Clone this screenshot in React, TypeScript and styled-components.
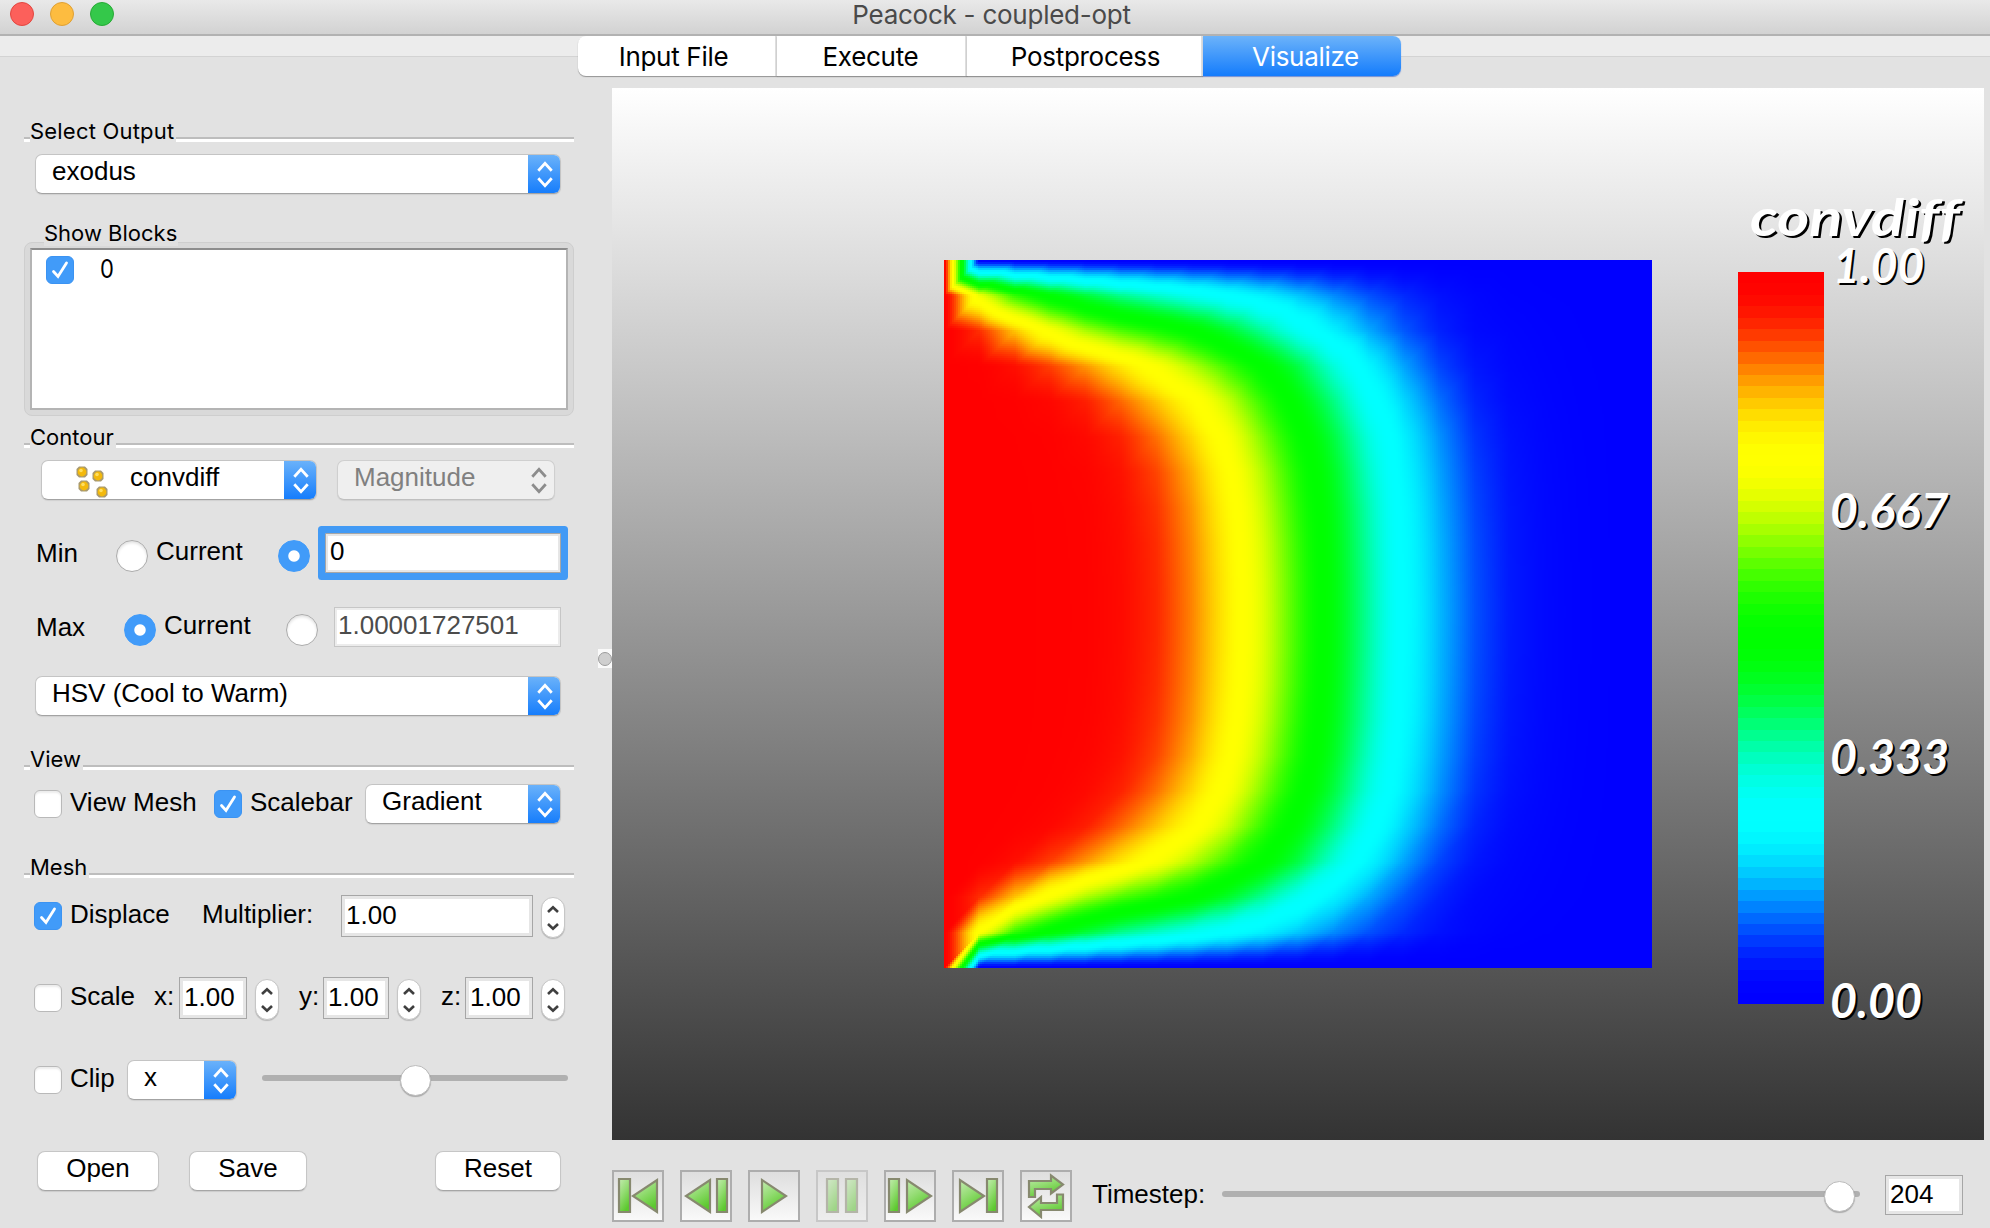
import React, { useLayoutEffect, useRef } from "react";
import styled, { createGlobalStyle, css } from "styled-components";

const GlobalStyle = createGlobalStyle`
  * { box-sizing: border-box; }
  body { margin: 0; background: #e2e2e2; overflow: hidden; }
`;

const HELV = `"Liberation Sans", Arial, Helvetica, sans-serif`;
const SYSTEM = `Inter, "Liberation Sans", sans-serif`;

/* ---------- scalar field and colour map ---------- */

const CELLS = 20;

type Knot = [number, number];

const LEVELS = [0.95, 0.875, 0.75, 0.625, 0.5, 0.375, 0.25, 0.125, 0.06];

/* Where a mesh row crosses each level; `core` is where it leaves the saturated region. */
function profile(core: number, ...at: number[]): Knot[] {
  const last = at[at.length - 1];
  return [
    [0, 1],
    [core, 0.986],
    ...at.map<Knot>((x, i) => [x, LEVELS[i]]),
    [last + 1.3, 0.028],
    [20, 0.001],
  ];
}

const rows: Knot[][] = [
  [[0, 1], [1, 0], [20, 0]],
  [
    [0, 1], [1, 0.71], [2, 0.57], [3, 0.485], [4, 0.42], [5, 0.365], [6, 0.325], [7, 0.285], [8, 0.248],
    [9, 0.212], [10, 0.172], [11, 0.132], [12, 0.095], [13, 0.065], [14, 0.04], [15, 0.024], [16, 0.013],
    [18, 0.004], [20, 0.001],
  ],
  [
    [0, 1], [1, 0.93], [1.8, 0.85], [2.8, 0.75], [4.4, 0.625], [7, 0.5], [9, 0.36], [10.45, 0.25],
    [12.5, 0.125], [13.8, 0.065], [15.1, 0.03], [20, 0.001],
  ],
  profile(1.2, 2.3, 3.75, 5.75, 7.45, 9.0, 10.4, 11.65, 13.35, 14.6),
  profile(2.2, 3.85, 5.25, 7.2, 8.5, 9.75, 11.0, 12.2, 13.85, 15.05),
  profile(3.0, 4.75, 6.15, 7.8, 9.0, 10.2, 11.4, 12.55, 14.17, 15.35),
  profile(3.5, 5.25, 6.6, 8.12, 9.3, 10.45, 11.6, 12.7, 14.33, 15.5),
  profile(3.75, 5.45, 6.8, 8.28, 9.45, 10.57, 11.72, 12.82, 14.43, 15.6),
  profile(3.85, 5.57, 6.9, 8.38, 9.55, 10.65, 11.78, 12.87, 14.5, 15.66),
  profile(3.9, 5.63, 6.95, 8.43, 9.6, 10.69, 11.82, 12.9, 14.53, 15.7),
  profile(3.92, 5.65, 6.97, 8.45, 9.61, 10.7, 11.83, 12.92, 14.55, 15.72),
];

/* Monotone cubic interpolation through the knots. */
function sampleRow(knots: Knot[], x: number) {
  const n = knots.length;
  const slope: number[] = [];
  for (let i = 0; i < n - 1; i++) {
    slope.push((knots[i + 1][1] - knots[i][1]) / (knots[i + 1][0] - knots[i][0]));
  }
  const tangent = knots.map((_, i) => {
    if (i === 0 || i === n - 1) return 0;
    const a = slope[i - 1];
    const b = slope[i];
    return a * b <= 0 ? 0 : (2 * a * b) / (a + b);
  });
  let i = 0;
  while (i < n - 2 && x >= knots[i + 1][0]) i++;
  const h = knots[i + 1][0] - knots[i][0];
  const t = Math.min(1, (x - knots[i][0]) / h);
  const t2 = t * t;
  const t3 = t2 * t;
  return (
    (2 * t3 - 3 * t2 + 1) * knots[i][1] +
    (t3 - 2 * t2 + t) * h * tangent[i] +
    (3 * t2 - 2 * t3) * knots[i + 1][1] +
    (t3 - t2) * h * tangent[i + 1]
  );
}

const nodes = Array.from({ length: CELLS + 1 }, (_, r) =>
  Array.from({ length: CELLS + 1 }, (_, c) => sampleRow(rows[Math.min(r, CELLS - r)], c))
);
nodes[CELLS - 1][1] = 0.74;

/* Linear interpolation on triangles split along the rising diagonal. */
function fieldAt(u: number, v: number) {
  const cx = Math.min(CELLS - 1, Math.floor(u * CELLS));
  const cy = Math.min(CELLS - 1, Math.floor(v * CELLS));
  const x = u * CELLS - cx;
  const y = v * CELLS - cy;
  const tl = nodes[cy][cx];
  const tr = nodes[cy][cx + 1];
  const bl = nodes[cy + 1][cx];
  const br = nodes[cy + 1][cx + 1];
  return x + y <= 1
    ? tl + (tr - tl) * x + (bl - tl) * y
    : br + (bl - br) * (1 - x) + (tr - br) * (1 - y);
}

const sCurve = (t: number) => Math.round(127.5 * (1 - Math.cos(Math.PI * Math.max(0, Math.min(1, t)))));

function rainbow(value: number): [number, number, number] {
  const h = (1 - Math.max(0, Math.min(1, value))) * 4;
  return [sCurve(2 - h), sCurve(h < 2 ? h : 4 - h), sCurve(h - 2)];
}

const BANDS = 64;
const bands = Array.from({ length: BANDS }, (_, i) => `rgb(${rainbow(1 - i / (BANDS - 1)).join(",")})`);

const PLOT = 354;

const PlotCanvas = styled.canvas`
  width: 708px;
  height: 708px;
  margin-left: 332px;
  image-rendering: pixelated;
  flex: none;
`;

function ContourPlot() {
  const ref = useRef<HTMLCanvasElement>(null);
  useLayoutEffect(() => {
    const ctx = ref.current?.getContext("2d");
    if (!ctx) return;
    const img = ctx.createImageData(PLOT, PLOT);
    for (let y = 0; y < PLOT; y++) {
      for (let x = 0; x < PLOT; x++) {
        const [r, g, b] = rainbow(fieldAt((x + 0.5) / PLOT, (y + 0.5) / PLOT));
        const o = (y * PLOT + x) * 4;
        img.data[o] = r;
        img.data[o + 1] = g;
        img.data[o + 2] = b;
        img.data[o + 3] = 255;
      }
    }
    ctx.putImageData(img, 0, 0);
  }, []);
  return <PlotCanvas ref={ref} width={PLOT} height={PLOT} />;
}

/* ---------- window chrome ---------- */

const Window = styled.div`
  width: 1990px;
  height: 1228px;
  display: flex;
  flex-direction: column;
  background: #e2e2e2;
  color: #000;
  font: 26px/30px ${HELV};
  overflow: hidden;
  white-space: nowrap;
`;

const TitleBar = styled.header`
  height: 36px;
  flex: none;
  display: grid;
  grid-template-columns: 1fr auto 1fr;
  align-items: start;
  background: linear-gradient(#e9e9e9, #d2d2d2);
  border-bottom: 2px solid #b2b2b2;
`;

const Lights = styled.div`
  display: flex;
  gap: 16px;
  padding: 2px 0 0 10px;
`;

const Light = styled.span<{ $fill: string; $rim: string }>`
  width: 24px;
  height: 24px;
  border-radius: 50%;
  background: ${(p) => p.$fill};
  border: 1px solid ${(p) => p.$rim};
`;

const WindowTitle = styled.h1`
  margin: 0 0 0 -7px;
  font: 400 26px/30px ${SYSTEM};
  letter-spacing: -0.25px;
  color: #4a4a4a;
`;

const TabBar = styled.nav`
  height: 52px;
  flex: none;
  display: flex;
  align-items: flex-start;
  padding-left: 578px;
  background: linear-gradient(#ececec 20px, #d3d3d3 20px, #d3d3d3 21px, #e2e2e2 21px);
`;

const Tab = styled.button<{ $w: number; $pl?: number; $pr?: number; $on?: boolean }>`
  width: ${(p) => p.$w}px;
  height: 40px;
  padding: 0 ${(p) => p.$pr ?? 0}px 0 ${(p) => p.$pl ?? 0}px;
  border: 0;
  border-right: 2px solid #dedede;
  background: #fff;
  color: #000;
  font: 400 26px/42px ${SYSTEM};
  letter-spacing: -0.3px;
  box-shadow: 0 1px 1px rgba(0, 0, 0, 0.35);
  &:first-child { border-radius: 8px 0 0 8px; }
  ${(p) =>
    p.$on &&
    css`
      border-right: 0;
      border-radius: 0 8px 8px 0;
      color: #fff;
      background: linear-gradient(#6cb3fa, #147cfc);
      box-shadow: 0 1px 1px rgba(0, 60, 200, 0.5);
    `}
`;

const Main = styled.main`
  flex: 1;
  display: flex;
  min-height: 0;
`;

/* ---------- left panel ---------- */

const Panel = styled.aside`
  width: 598px;
  flex: none;
  padding: 29px 24px 0;
`;

const Splitter = styled.div`
  width: 14px;
  flex: none;
  display: flex;
  align-items: center;
`;

const Handle = styled.span`
  width: 14px;
  height: 19px;
  margin-top: 1px;
  display: flex;
  align-items: center;
  justify-content: center;
  background: #fafafa;
  &::before {
    content: "";
    width: 12px;
    height: 12px;
    border-radius: 50%;
    border: 1px solid #9c9c9c;
    background: #cfcfcf;
  }
`;

const Header = styled.div<{ $top?: number }>`
  display: flex;
  align-items: flex-end;
  height: 26px;
  margin-top: ${(p) => p.$top ?? 0}px;
`;

const Rule = styled.i<{ $w?: number }>`
  ${(p) => (p.$w ? `width: ${p.$w}px;` : "flex: 1;")}
  height: 5px;
  margin-bottom: 1px;
  border-top: 2px solid #bdbdbd;
  background: #fff;
`;

const Caption = styled.span<{ $ls?: number }>`
  height: 26px;
  font: 400 22px/28px ${SYSTEM};
  letter-spacing: ${(p) => p.$ls ?? 0}px;
  padding-right: 2px;
`;

function GroupTitle({ text, top, ls }: { text: string; top?: number; ls?: number }) {
  return (
    <Header $top={top}>
      <Rule $w={6} />
      <Caption $ls={ls}>{text}</Caption>
      <Rule />
    </Header>
  );
}

const Row = styled.div<{ $top: number; $h: number; $left: number }>`
  display: flex;
  align-items: center;
  height: ${(p) => p.$h}px;
  margin-top: ${(p) => p.$top}px;
  padding-left: ${(p) => p.$left}px;
`;

const Label = styled.span<{ $w: number; $up?: number }>`
  width: ${(p) => p.$w}px;
  flex: none;
  padding-bottom: ${(p) => p.$up ?? 5}px;
`;

const Combo = styled.div<{ $w: number; $ml?: number; $off?: boolean }>`
  width: ${(p) => p.$w}px;
  height: 40px;
  flex: none;
  display: flex;
  align-items: stretch;
  margin-left: ${(p) => p.$ml ?? 0}px;
  border-radius: 7px;
  overflow: hidden;
  background: ${(p) => (p.$off ? "#efefef" : "#fff")};
  color: ${(p) => (p.$off ? "#808080" : "#000")};
  border: 1px solid ${(p) => (p.$off ? "#cfcfcf" : "#c4c4c4")};
  border-bottom-color: ${(p) => (p.$off ? "#bfbfbf" : "#a3a3a3")};
  box-shadow: 0 1px 1px rgba(0, 0, 0, 0.08);
`;

const ComboText = styled.span<{ $pl: number }>`
  flex: 1;
  padding-left: ${(p) => p.$pl}px;
  line-height: 33px;
`;

const ComboArrow = styled.span<{ $off?: boolean }>`
  width: 33px;
  margin: -1px;
  display: flex;
  align-items: center;
  justify-content: center;
  background: ${(p) => (p.$off ? "transparent" : "linear-gradient(#6cb3fa, #147cfc)")};
  color: ${(p) => (p.$off ? "#8c8c8c" : "#fff")};
`;

function Chevrons() {
  return (
    <svg width="18" height="28" viewBox="0 0 18 28" fill="none" stroke="currentColor" strokeWidth="2.8">
      <path d="M2.3 10.7 9 3.4 15.7 10.7" />
      <path d="M2.3 18.3 9 25.6 15.7 18.3" />
    </svg>
  );
}

function Select(props: { w: number; ml?: number; pl?: number; off?: boolean; icon?: React.ReactNode; children: string }) {
  return (
    <Combo $w={props.w} $ml={props.ml} $off={props.off}>
      {props.icon}
      <ComboText $pl={props.pl ?? 16}>{props.children}</ComboText>
      <ComboArrow $off={props.off}>
        <Chevrons />
      </ComboArrow>
    </Combo>
  );
}

const BallsSvg = styled.svg`
  flex: none;
  margin: 3px 0 0 32px;
`;

function NodalIcon() {
  return (
    <BallsSvg width="36" height="34" viewBox="0 0 36 34">
      {[[8, 8], [24, 12], [10, 22], [28, 28]].map(([x, y]) => (
        <g key={`${x}-${y}`}>
          <path
            d={`M${x - 3} ${y - 5.5}h6l2.5 2.5v6l-2.5 2.5h-6l-2.5-2.5v-6z`}
            fill="#a8996f"
          />
          <circle cx={x} cy={y} r="4.4" fill="#f3b90c" />
          <circle cx={x - 1} cy={y - 1.5} r="1.8" fill="#ffde5e" />
        </g>
      ))}
    </BallsSvg>
  );
}

const Box = styled.span<{ $on?: boolean; $ml?: number }>`
  width: 28px;
  height: 28px;
  flex: none;
  display: flex;
  align-items: center;
  justify-content: center;
  margin: 0 8px 0 ${(p) => p.$ml ?? 0}px;
  border-radius: 6px;
  background: ${(p) => (p.$on ? "#419bf9" : "#fff")};
  border: 1px solid ${(p) => (p.$on ? "#3b93f2" : "#b9b9b9")};
  box-shadow: ${(p) => (p.$on ? "none" : "inset 0 2px 2px rgba(0,0,0,0.08)")};
`;

function Check({ on, ml }: { on?: boolean; ml?: number }) {
  return (
    <Box $on={on} $ml={ml}>
      {on && (
        <svg width="20" height="20" viewBox="0 0 20 20" fill="none" stroke="#fff" strokeWidth="2.8" strokeLinecap="round">
          <path d="M3.5 11.5 8 16.5 16.5 3" />
        </svg>
      )}
    </Box>
  );
}

const Radio = styled.span<{ $on?: boolean; $mr: number }>`
  width: 32px;
  height: 32px;
  flex: none;
  margin: 6px ${(p) => p.$mr}px 0 0;
  border-radius: 50%;
  background: ${(p) => (p.$on ? "radial-gradient(circle, #fff 5.2px, #419bf9 6.2px)" : "#fff")};
  border: 1px solid ${(p) => (p.$on ? "#419bf9" : "#ababab")};
  box-shadow: ${(p) => (p.$on ? "none" : "inset 0 2px 3px rgba(0,0,0,0.12)")};
`;

const Field = styled.span<{ $w: number; $h?: number; $state?: "focus" | "idle"; $lh?: number }>`
  width: ${(p) => p.$w}px;
  height: ${(p) => p.$h ?? 42}px;
  flex: none;
  padding-left: 4px;
  line-height: ${(p) => p.$lh ?? 39}px;
  background: #fff;
  border: 1px solid #a6a6a6;
  outline: 3px solid #e6e6e6;
  outline-offset: -4px;
  ${(p) =>
    p.$state === "focus" &&
    css`
      margin-left: 7px;
      outline-width: 2px;
      outline-offset: -3px;
      box-shadow: 0 0 0 7px #429af5;
      border-radius: 1px;
    `}
  ${(p) =>
    p.$state === "idle" &&
    css`
      padding-left: 3px;
      color: #4c4c4c;
      border-color: #c6c6c6;
      outline: 2px solid #ececec;
      outline-offset: -3px;
    `}
`;

const StepperBox = styled.span<{ $mr?: number }>`
  width: 24px;
  height: 41px;
  flex: none;
  display: flex;
  align-items: center;
  justify-content: center;
  margin: 3px ${(p) => p.$mr ?? 0}px 0 8px;
  border-radius: 12px;
  background: #fff;
  border: 1px solid #c6c6c6;
  box-shadow: 0 1px 1px rgba(0, 0, 0, 0.2);
`;

function Stepper({ mr }: { mr?: number }) {
  return (
    <StepperBox $mr={mr}>
      <svg width="14" height="28" viewBox="0 0 14 28" fill="none" stroke="#3f3f3f" strokeWidth="2.6">
        <path d="M2 8 7 3.2 12 8" />
        <path d="M2 20 7 24.8 12 20" />
      </svg>
    </StepperBox>
  );
}

const Track = styled.div<{ $w: number; $ml: number; $up: number }>`
  width: ${(p) => p.$w}px;
  height: 6px;
  flex: none;
  display: flex;
  align-items: center;
  margin: 0 0 ${(p) => p.$up}px ${(p) => p.$ml}px;
  border-radius: 3px;
  background: #b0b0b0;
`;

const Knob = styled.span<{ $at: number }>`
  width: 31px;
  height: 31px;
  flex: none;
  margin: 4px 0 0 ${(p) => p.$at}px;
  border-radius: 50%;
  background: #fff;
  border: 1px solid #bcbcbc;
  box-shadow: 0 1px 1px rgba(0, 0, 0, 0.25);
`;

const PushButton = styled.button<{ $w: number; $ml?: number }>`
  width: ${(p) => p.$w}px;
  height: 40px;
  margin: 0 0 0 ${(p) => p.$ml ?? 0}px;
  padding: 0;
  border: 1px solid #c6c6c6;
  border-bottom-color: #a6a6a6;
  border-radius: 8px;
  background: #fff;
  box-shadow: 0 1px 1px rgba(0, 0, 0, 0.1);
  font: 26px/32px ${HELV};
  display: flex;
  justify-content: center;
`;

const BlocksCaption = styled(Caption)`
  display: block;
  position: relative;
  z-index: 1;
  width: 134px;
  height: 26px;
  line-height: 26px;
  margin: 26px 0 0 20px;
  background: linear-gradient(#e2e2e2 22px, #e0e0e0 22px);
`;

const BlocksFrame = styled.div`
  height: 174px;
  margin-top: -4px;
  padding: 5px 5px 0;
  border: 1px solid #cecece;
  border-radius: 8px;
  background: #d9d9d9;
`;

const BlocksList = styled.div`
  height: 162px;
  display: flex;
  align-items: flex-start;
  padding: 6px 0 0 14px;
  background: #fff;
  border: 2px solid #b4b4b4;
  border-top-color: #8d8d8d;
`;

const BlockName = styled.span`
  margin-left: 18px;
  font: 400 25px/26px ${SYSTEM};
  transform: scaleX(0.88);
  transform-origin: left;
`;

/* ---------- viewport ---------- */

const View = styled.section`
  display: flex;
  flex-direction: column;
  width: 1378px;
`;

const Viewport = styled.div`
  width: 1372px;
  height: 1052px;
  display: flex;
  align-items: flex-start;
  padding-top: 172px;
  background: linear-gradient(#ffffff, #333333);
`;

const ScaleBar = styled.div`
  position: relative;
  width: 86px;
  height: 732px;
  margin: 12px 0 0 86px;
  display: flex;
  flex-direction: column;
`;

const Band = styled.i<{ $c: string }>`
  flex: 1;
  background: ${(p) => p.$c};
`;

const ScaleText = styled.span<{ $x: number; $y: number; $size: number; $sx: number; $ls?: number }>`
  position: absolute;
  left: ${(p) => p.$x}px;
  top: ${(p) => p.$y}px;
  font: italic 700 ${(p) => p.$size}px/48px Lato, "Open Sans", sans-serif;
  letter-spacing: ${(p) => p.$ls ?? 0}px;
  font-variant-ligatures: none;
  color: #fff;
  text-shadow: 2px 2px 0 #000;
  transform: scaleX(${(p) => p.$sx});
  transform-origin: left;
`;

/* ---------- playback ---------- */

const Playback = styled.div`
  display: flex;
  align-items: center;
  height: 52px;
  margin-top: 30px;
`;

const ToolButton = styled.button<{ $off?: boolean }>`
  width: 52px;
  height: 52px;
  flex: none;
  margin: 0 16px 0 0;
  padding: 0;
  border: 2px solid #adadad;
  background: linear-gradient(#dedede, #f9f9f9);
  opacity: ${(p) => (p.$off ? 0.5 : 1)};
  svg { display: block; margin: -2px; }
`;

const icons: string[][] = [
  ["M7 9H18V42H7Z", "M45 10V42L21 26Z"],
  ["M30 10V42L6 26Z", "M37 9H47V42H37Z"],
  ["M14 10V42L38 26Z"],
  ["M11 9H22V42H11Z", "M30 9H41V42H30Z"],
  ["M5 9H15V42H5Z", "M23 10V42L47 26Z"],
  ["M8 10V42L32 26Z", "M35 9H45V42H35Z"],
  ["M9 11H31V5.5L43 14.5L31 23.5V19H15V27H9Z", "M43 24.5H37V33H21V27L9 37L21 47V40H43Z"],
];

function ToolIcon({ shapes }: { shapes: string[] }) {
  return (
    <svg width="52" height="52" viewBox="0 0 52 52" stroke="#87896f" strokeWidth="2.2" fill="url(#leaf)">
      <defs>
        <linearGradient id="leaf" x1="0" y1="0" x2="0.5" y2="1">
          <stop offset="0" stopColor="#c4ecb0" />
          <stop offset="0.5" stopColor="#93dc72" />
          <stop offset="1" stopColor="#5cc92e" />
        </linearGradient>
      </defs>
      {shapes.map((d) => (
        <path key={d} d={d} />
      ))}
    </svg>
  );
}

const StepLabel = styled.span`
  margin-left: 4px;
  width: 113px;
  padding-bottom: 4px;
`;

export default function App() {
  return (
    <Window>
      <GlobalStyle />
      <TitleBar>
        <Lights>
          <Light $fill="#fc605b" $rim="#e2463f" />
          <Light $fill="#fdbc40" $rim="#dfa034" />
          <Light $fill="#34c84a" $rim="#27aa35" />
        </Lights>
        <WindowTitle>Peacock - coupled-opt</WindowTitle>
      </TitleBar>
      <TabBar>
        <Tab $w={199} $pr={6}>Input File</Tab>
        <Tab $w={190} $pr={1}>Execute</Tab>
        <Tab $w={236} $pl={3}>Postprocess</Tab>
        <Tab $w={198} $pl={7} $on>Visualize</Tab>
      </TabBar>
      <Main>
        <Panel>
          <GroupTitle text="Select Output" ls={0.2} />
          <Row $top={11} $h={40} $left={11}>
            <Select w={526}>exodus</Select>
          </Row>

          <BlocksCaption>Show Blocks</BlocksCaption>
          <BlocksFrame>
            <BlocksList>
              <Check on />
              <BlockName>0</BlockName>
            </BlocksList>
          </BlocksFrame>

          <GroupTitle text="Contour" top={7} />
          <Row $top={11} $h={40} $left={17}>
            <Select w={276} pl={20} icon={<NodalIcon />}>convdiff</Select>
            <Select w={218} ml={20} off>Magnitude</Select>
          </Row>
          <Row $top={26} $h={54} $left={12}>
            <Label $w={80} $up={0}>Min</Label>
            <Radio $mr={8} />
            <Label $w={122} $up={4}>Current</Label>
            <Radio $on $mr={8} />
            <Field $w={236} $h={40} $state="focus" $lh={35}>0</Field>
          </Row>
          <Row $top={20} $h={54} $left={12}>
            <Label $w={88} $up={0}>Max</Label>
            <Radio $on $mr={8} />
            <Label $w={122} $up={4}>Current</Label>
            <Radio $mr={16} />
            <Field $w={227} $h={40} $state="idle" $lh={35}>1.00001727501</Field>
          </Row>
          <Row $top={22} $h={40} $left={11}>
            <Select w={526}>HSV (Cool to Warm)</Select>
          </Row>

          <GroupTitle text="View" top={29} />
          <Row $top={13} $h={40} $left={10}>
            <Check />
            <Label $w={144}>View Mesh</Label>
            <Check on />
            <Label $w={115}>Scalebar</Label>
            <Select w={196}>Gradient</Select>
          </Row>

          <GroupTitle text="Mesh" top={29} />
          <Row $top={16} $h={42} $left={10}>
            <Check on />
            <Label $w={132}>Displace</Label>
            <Label $w={139}>Multiplier:</Label>
            <Field $w={192}>1.00</Field>
            <Stepper />
          </Row>
          <Row $top={40} $h={42} $left={10}>
            <Check />
            <Label $w={84}>Scale</Label>
            <Label $w={25}>x:</Label>
            <Field $w={68}>1.00</Field>
            <Stepper mr={20} />
            <Label $w={24}>y:</Label>
            <Field $w={66}>1.00</Field>
            <Stepper mr={20} />
            <Label $w={24}>z:</Label>
            <Field $w={68}>1.00</Field>
            <Stepper />
          </Row>
          <Row $top={41} $h={40} $left={10}>
            <Check />
            <Label $w={57}>Clip</Label>
            <Select w={110}>x</Select>
            <Track $w={306} $ml={25} $up={4}>
              <Knob $at={138} />
            </Track>
          </Row>
          <Row $top={51} $h={40} $left={13}>
            <PushButton $w={122}>Open</PushButton>
            <PushButton $w={118} $ml={30}>Save</PushButton>
            <PushButton $w={126} $ml={128}>Reset</PushButton>
          </Row>
        </Panel>
        <Splitter>
          <Handle />
        </Splitter>
        <View>
          <Viewport>
            <ContourPlot />
            <ScaleBar>
              {bands.map((c, i) => (
                <Band key={i} $c={c} />
              ))}
              <ScaleText $x={12} $y={-80} $size={52} $sx={1.18}>convdiff</ScaleText>
              <ScaleText $x={95} $y={-31} $size={48} $sx={0.96}>1.00</ScaleText>
              <ScaleText $x={92} $y={214} $size={48} $sx={1}>0.667</ScaleText>
              <ScaleText $x={92} $y={460} $size={48} $sx={0.97}>0.333</ScaleText>
              <ScaleText $x={92} $y={704} $size={48} $sx={0.97}>0.00</ScaleText>
            </ScaleBar>
          </Viewport>
          <Playback>
            {icons.map((shapes, i) => (
              <ToolButton key={i} $off={i === 3}>
                <ToolIcon shapes={shapes} />
              </ToolButton>
            ))}
            <StepLabel>Timestep:</StepLabel>
            <Track $w={638} $ml={17} $up={4}>
              <Knob $at={602} />
            </Track>
            <Row $top={-2} $h={40} $left={25}>
              <Field $w={78} $h={40} $lh={36}>204</Field>
            </Row>
          </Playback>
        </View>
      </Main>
    </Window>
  );
}
